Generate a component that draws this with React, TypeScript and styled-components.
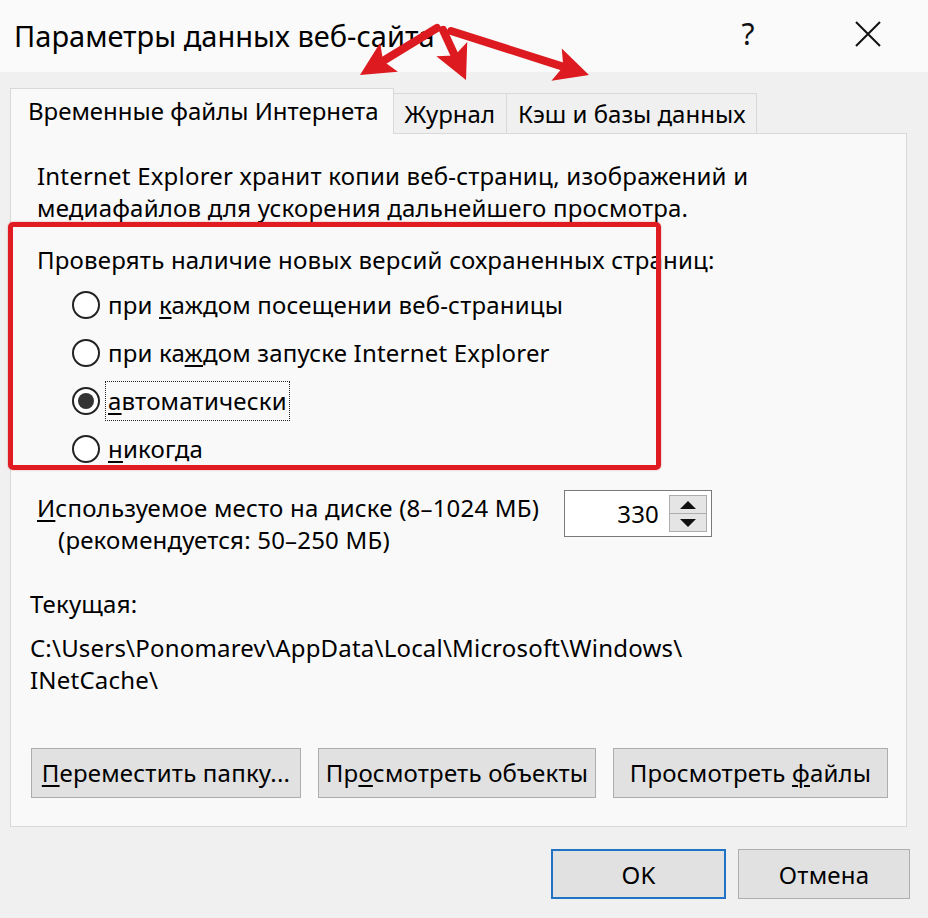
import styled, { createGlobalStyle } from 'styled-components';

const GlobalStyle = createGlobalStyle`
  html, body {
    margin: 0;
    padding: 0;
  }
  body {
    background: #f0f0f0;
    font-family: 'Noto Sans', 'Open Sans', sans-serif;
    color: #111;
  }
  *, *::before, *::after {
    box-sizing: border-box;
  }
`;

const Window = styled.div`
  position: relative;
  width: 928px;
  height: 918px;
  background: #f0f0f0;
  display: flex;
  flex-direction: column;
  overflow: hidden;
`;

const TitleBar = styled.div`
  height: 72px;
  background: #fafafa;
  display: flex;
  align-items: center;
  padding-left: 14px;
`;

const Title = styled.div`
  flex: 1;
  font-size: 29px;
  color: #000;
  padding-bottom: 2px;
`;

const HelpButton = styled.div`
  width: 40px;
  text-align: center;
  font-size: 30px;
  color: #111;
  margin-right: 87px;
  padding-bottom: 6px;
`;

const CloseButton = styled.div`
  width: 26px;
  height: 26px;
  margin-right: 47px;
  margin-bottom: 4px;
  display: flex;
`;

const TabStrip = styled.div`
  height: 61px;
  display: flex;
  align-items: flex-end;
  padding-left: 10px;
`;

const Tab = styled.div<{ $active?: boolean }>`
  height: ${(p) => (p.$active ? '46px' : '40px')};
  display: flex;
  align-items: center;
  padding: ${(p) => (p.$active ? '0 14px 2px 17px' : '0 11px')};
  font-size: 24px;
  color: #000;
  background: ${(p) => (p.$active ? '#f9f9f9' : '#f0f0f0')};
  border: 1px solid #d9d9d9;
  border-left: ${(p) => (p.$active ? '1px solid #d9d9d9' : 'none')};
  border-bottom: none;
  margin-bottom: ${(p) => (p.$active ? '-1px' : '0')};
  position: relative;
  z-index: ${(p) => (p.$active ? 1 : 0)};
`;

const Panel = styled.div`
  margin: 0 21px 0 10px;
  height: 694px;
  border: 1px solid #d9d9d9;
  background: #f9f9f9;
  display: flex;
  flex-direction: column;
  font-size: 24px;
  line-height: 32px;
  letter-spacing: 0.2px;
  color: #000;
`;

const Paragraph = styled.div<{ $top: number; $left: number }>`
  margin-top: ${(p) => p.$top}px;
  padding-left: ${(p) => p.$left}px;
`;

const Highlight = styled.div`
  position: relative;
  margin-top: 20px;
  &::after {
    content: '';
    position: absolute;
    left: -3px;
    top: -22px;
    width: 653px;
    height: 248px;
    border: 5px solid #e11b22;
    border-radius: 5px;
    box-shadow: 0 0 2px rgba(180, 0, 0, 0.4);
    pointer-events: none;
  }
`;

const GroupLabel = styled.div`
  padding-left: 26px;
`;

const RadioList = styled.div`
  margin-top: 5px;
  display: flex;
  flex-direction: column;
`;

const RadioRow = styled.div`
  height: 48px;
  display: flex;
  align-items: center;
  padding-left: 61px;
  gap: 8px;
`;

const RadioCircle = styled.span<{ $checked?: boolean }>`
  width: 28px;
  height: 28px;
  border-radius: 50%;
  border: 2px solid #222;
  background: #fff;
  display: flex;
  align-items: center;
  justify-content: center;
  flex-shrink: 0;
  &::after {
    content: '';
    width: 16px;
    height: 16px;
    border-radius: 50%;
    background: #333;
    display: ${(p) => (p.$checked ? 'block' : 'none')};
  }
`;

const RadioText = styled.span<{ $focused?: boolean }>`
  outline: ${(p) => (p.$focused ? '1px dotted #222' : 'none')};
  outline-offset: 2px;
  line-height: 34px;
`;

const Key = styled.u`
  text-underline-offset: 3px;
  text-decoration-thickness: 2px;
`;

const UsageRow = styled.div`
  margin-top: 17px;
  display: flex;
  align-items: flex-start;
  padding-left: 26px;
`;

const UsageLabel = styled.div`
  flex: 0 0 527px;
  margin-top: 2px;
`;

const Indent = styled.div`
  padding-left: 21px;
`;

const SpinBox = styled.div`
  width: 148px;
  height: 47px;
  border: 1px solid #7a7a7a;
  background: #fff;
  display: flex;
  align-items: stretch;
`;

const SpinValue = styled.div`
  flex: 1;
  padding-right: 10px;
  display: flex;
  align-items: center;
  justify-content: flex-end;
`;

const SpinButtons = styled.div`
  width: 38px;
  margin: 4px 4px 4px 0;
  display: flex;
  flex-direction: column;
  border: 1px solid #adadad;
  background: #e5e5e5;
`;

const SpinButton = styled.div<{ $up?: boolean }>`
  flex: 1;
  display: flex;
  align-items: center;
  justify-content: center;
  border-bottom: ${(p) => (p.$up ? '1px solid #adadad' : 'none')};
  &::after {
    content: '';
    border-left: 8px solid transparent;
    border-right: 8px solid transparent;
    ${(p) => (p.$up ? 'border-bottom: 8px solid #111;' : 'border-top: 8px solid #111;')}
  }
`;

const ButtonRow = styled.div`
  margin-top: 52px;
  padding-left: 20px;
  display: flex;
  gap: 17px;
`;

const PushButton = styled.div<{ $width: number; $default?: boolean }>`
  width: ${(p) => p.$width}px;
  height: 50px;
  background: #e1e1e1;
  border: ${(p) => (p.$default ? '2px solid #1f72c4' : '1px solid #adadad')};
  display: flex;
  align-items: center;
  justify-content: center;
  font-size: 24px;
  letter-spacing: 0.2px;
  color: #000;
  flex-shrink: 0;
`;

const Footer = styled.div`
  display: flex;
  justify-content: flex-end;
  gap: 12px;
  padding: 22px 18px 0 0;
`;

const Annotation = styled.svg`
  position: absolute;
  left: 0;
  top: 0;
  pointer-events: none;
  z-index: 5;
`;

type Pt = [number, number];

function Arrow({ from, to }: { from: Pt; to: Pt }) {
  const [x1, y1] = from;
  const [x2, y2] = to;
  const len = Math.hypot(x2 - x1, y2 - y1);
  const ux = (x2 - x1) / len;
  const uy = (y2 - y1) / len;
  const px = -uy;
  const py = ux;
  const hl = 34;
  const hw = 17;
  const bx = x2 - ux * hl;
  const by = y2 - uy * hl;
  const head = `${x2},${y2} ${bx + px * hw},${by + py * hw} ${bx + ux * 7},${by + uy * 7} ${bx - px * hw},${by - py * hw}`;
  return (
    <g>
      <line x1={x1} y1={y1} x2={bx + ux * 9} y2={by + uy * 9} stroke='#dc1a1f' strokeWidth={8} strokeLinecap='round' />
      <polygon points={head} fill='#dc1a1f' />
    </g>
  );
}

const radios = [
  { before: 'при ', key: 'к', after: 'аждом посещении веб-страницы' },
  { before: 'при ка', key: 'ж', after: 'дом запуске Internet Explorer' },
  { before: '', key: 'а', after: 'втоматически', checked: true },
  { before: '', key: 'н', after: 'икогда' },
];

export default function App() {
  return (
    <>
      <GlobalStyle />
      <Window>
        <TitleBar>
          <Title>Параметры данных веб-сайта</Title>
          <HelpButton>?</HelpButton>
          <CloseButton>
            <svg width='26' height='26' viewBox='0 0 26 26'>
              <path d='M1 1 L25 25 M25 1 L1 25' stroke='#111' strokeWidth={2} />
            </svg>
          </CloseButton>
        </TitleBar>

        <TabStrip>
          <Tab $active>Временные файлы Интернета</Tab>
          <Tab>Журнал</Tab>
          <Tab>Кэш и базы данных</Tab>
        </TabStrip>

        <Panel>
          <Paragraph $top={26} $left={26}>
            Internet Explorer хранит копии веб-страниц, изображений и
            <br />
            медиафайлов для ускорения дальнейшего просмотра.
          </Paragraph>

          <Highlight>
            <GroupLabel>Проверять наличие новых версий сохраненных страниц:</GroupLabel>
            <RadioList>
              {radios.map((r) => (
                <RadioRow key={r.after}>
                  <RadioCircle $checked={r.checked} />
                  <RadioText $focused={r.checked}>
                    {r.before}
                    <Key>{r.key}</Key>
                    {r.after}
                  </RadioText>
                </RadioRow>
              ))}
            </RadioList>
          </Highlight>

          <UsageRow>
            <UsageLabel>
              <Key>И</Key>спользуемое место на диске (8–1024 МБ)
              <Indent>(рекомендуется: 50–250 МБ)</Indent>
            </UsageLabel>
            <SpinBox>
              <SpinValue>330</SpinValue>
              <SpinButtons>
                <SpinButton $up />
                <SpinButton />
              </SpinButtons>
            </SpinBox>
          </UsageRow>

          <Paragraph $top={32} $left={19}>
            Текущая:
          </Paragraph>
          <Paragraph $top={12} $left={19}>
            C:\Users\Ponomarev\AppData\Local\Microsoft\Windows\
            <br />
            INetCache\
          </Paragraph>

          <ButtonRow>
            <PushButton $width={270}>
              <span>
                <Key>П</Key>ереместить папку...
              </span>
            </PushButton>
            <PushButton $width={278}>
              <span>
                Пр<Key>о</Key>смотреть объекты
              </span>
            </PushButton>
            <PushButton $width={275}>
              <span>
                Просмотреть <Key>ф</Key>айлы
              </span>
            </PushButton>
          </ButtonRow>
        </Panel>

        <Footer>
          <PushButton $width={175} $default>
            OK
          </PushButton>
          <PushButton $width={172}>Отмена</PushButton>
        </Footer>

        <Annotation width='928' height='100' viewBox='0 0 928 100'>
          <Arrow from={[437, 28]} to={[360, 75]} />
          <Arrow from={[443, 30]} to={[466, 80]} />
          <Arrow from={[451, 31]} to={[589, 75]} />
        </Annotation>
      </Window>
    </>
  );
}
